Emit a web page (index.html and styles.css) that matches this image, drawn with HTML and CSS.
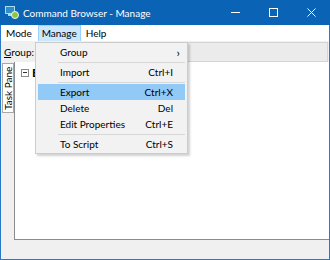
FILE: index.html
```html
<!DOCTYPE html>
<html lang="en">
<head>
    <meta charset="UTF-8">
    <title>Command Browser - Manage</title>
    <link rel="stylesheet" href="styles.css">
</head>
<body>
    <div class="window">
        <div class="titlebar">
            <svg class="app-icon" width="14" height="13" viewBox="0 0 14 13">
                <rect x="0.5" y="0.5" width="9" height="7" fill="#2f8ec4" stroke="#a8dcf0"/>
                <rect x="3" y="8" width="4" height="2" fill="#a8dcf0"/>
                <circle cx="10" cy="9" r="3.5" fill="#8cc63f" stroke="#f3f3f3"/>
            </svg>
            <span class="title">Command Browser - Manage</span>
            <div class="controls">
                <span class="ctl">
                    <svg width="9" height="9" viewBox="0 0 9 9"><path d="M0 4.5h9" stroke="#fff"/></svg>
                </span>
                <span class="ctl">
                    <svg width="9" height="9" viewBox="0 0 9 9"><rect x="0.5" y="0.5" width="8" height="8" fill="none" stroke="#fff"/></svg>
                </span>
                <span class="ctl">
                    <svg width="9" height="9" viewBox="0 0 9 9"><path d="M0.5 0.5l8 8M8.5 0.5l-8 8" stroke="#fff"/></svg>
                </span>
            </div>
        </div>
        <div class="menubar">
            <span class="menu-item">Mode</span>
            <span class="menu-item active">Manage</span>
            <span class="menu-item">Help</span>
        </div>
        <div class="toolbar">
            <span class="label"><u>G</u>roup:</span>
            <div class="combo"></div>
        </div>
        <div class="main">
            <div class="side">
                <div class="tab">Task Pane</div>
            </div>
            <div class="pane">
                <div class="node">
                    <span class="expander"></span>
                    <span class="node-icon">E</span>
                </div>
            </div>
        </div>
        <div class="statusbar">
            <span class="grip"></span>
        </div>

        <div class="dropdown">
            <div class="dd-item"><span>Group</span><span class="arrow">&#x203A;</span></div>
            <div class="dd-sep"></div>
            <div class="dd-item"><span>Import</span><span>Ctrl+I</span></div>
            <div class="dd-sep"></div>
            <div class="dd-item selected"><span>Export</span><span>Ctrl+X</span></div>
            <div class="dd-item"><span>Delete</span><span>Del</span></div>
            <div class="dd-item"><span>Edit Properties</span><span>Ctrl+E</span></div>
            <div class="dd-sep"></div>
            <div class="dd-item"><span>To Script</span><span>Ctrl+S</span></div>
        </div>
    </div>
</body>
</html>
```

FILE: styles.css
```css
* {
    box-sizing: border-box;
    margin: 0;
    padding: 0;
}
body {
    font-family: 'Lato', 'Noto Sans', sans-serif;
    background: #ffffff;
}
.window {
    position: relative;
    width: 330px;
    height: 260px;
    display: flex;
    flex-direction: column;
    background-color: #f0f0f0;
    border: 1px solid #2a78c8;
    border-top: none;
}
.titlebar {
    height: 25px;
    flex-shrink: 0;
    display: flex;
    align-items: center;
    background-color: #0a63b5;
    color: #ffffff;
    margin: 0 -1px;
    padding-left: 5px;
}
.app-icon {
    margin-right: 4px;
}
.title {
    font-size: 10px;
    flex-grow: 1;
}
.controls {
    display: flex;
    height: 100%;
}
.ctl {
    width: 38px;
    display: flex;
    align-items: center;
    justify-content: center;
}
.menubar {
    height: 16px;
    flex-shrink: 0;
    display: flex;
    background-color: #ffffff;
    font-size: 10px;
    color: #000000;
}
.menu-item {
    padding: 0 5px;
    line-height: 16px;
}
.menu-item.active {
    background-color: #cce8ff;
    border: 1px solid #99d1ff;
    border-bottom: none;
    line-height: 15px;
    padding: 0 3px;
    margin: 0 0 0 1px;
}
.toolbar {
    height: 21px;
    flex-shrink: 0;
    display: flex;
    align-items: center;
    font-size: 10px;
    padding-left: 3px;
}
.label {
    width: 32px;
}
.combo {
    flex-grow: 1;
    height: 20px;
    margin-right: 1px;
    background-color: #ebebeb;
    border: 1px solid #d4d4d4;
}
.main {
    flex-grow: 1;
    display: flex;
}
.side {
    width: 13px;
    padding: 1px 0 0 1px;
}
.tab {
    writing-mode: vertical-rl;
    transform: rotate(180deg);
    font-size: 10px;
    background-color: #ffffff;
    border: 1px solid #a8a8a8;
    width: 12px;
    height: 50px;
    text-align: center;
    line-height: 10px;
}
.pane {
    flex-grow: 1;
    background-color: #ffffff;
    border-left: 1px solid #8c8c8c;
    border-bottom: 1px solid #8c8c8c;
    padding: 6px 0 0 6px;
}
.node {
    display: flex;
    align-items: center;
    gap: 3px;
}
.expander {
    position: relative;
    width: 8px;
    height: 8px;
    border: 1px solid #8a8a8a;
    background: #ffffff;
}
.expander::after {
    content: '';
    position: absolute;
    left: 1px;
    top: 2px;
    width: 4px;
    height: 1px;
    background: #333333;
}
.node-icon {
    font-size: 12px;
    font-weight: bold;
    line-height: 10px;
}
.statusbar {
    height: 19px;
    flex-shrink: 0;
    display: flex;
    justify-content: flex-end;
    align-items: flex-end;
    padding: 0 1px 2px 0;
}
.grip {
    width: 7px;
    height: 7px;
    background-image: radial-gradient(#a0a0a0 45%, transparent 50%);
    background-size: 2px 2px;
}
.dropdown {
    position: absolute;
    left: 34px;
    top: 42px;
    width: 153px;
    padding: 1px 2px 1px 2px;
    background-color: #f2f2f2;
    border: 1px solid #cccccc;
    box-shadow: 2px 2px 2px rgba(0, 0, 0, 0.18);
    font-size: 10px;
}
.dd-item {
    height: 16px;
    display: flex;
    align-items: center;
    justify-content: space-between;
    padding: 0 12px 0 22px;
}
.dd-item.selected {
    background-color: #91c9f7;
}
.arrow {
    margin-right: -7px;
    font-size: 12px;
}
.dd-sep {
    margin: 2px 0 0 20px;
    height: 2px;
    border-top: 1px solid #d7d7d7;
}
```
